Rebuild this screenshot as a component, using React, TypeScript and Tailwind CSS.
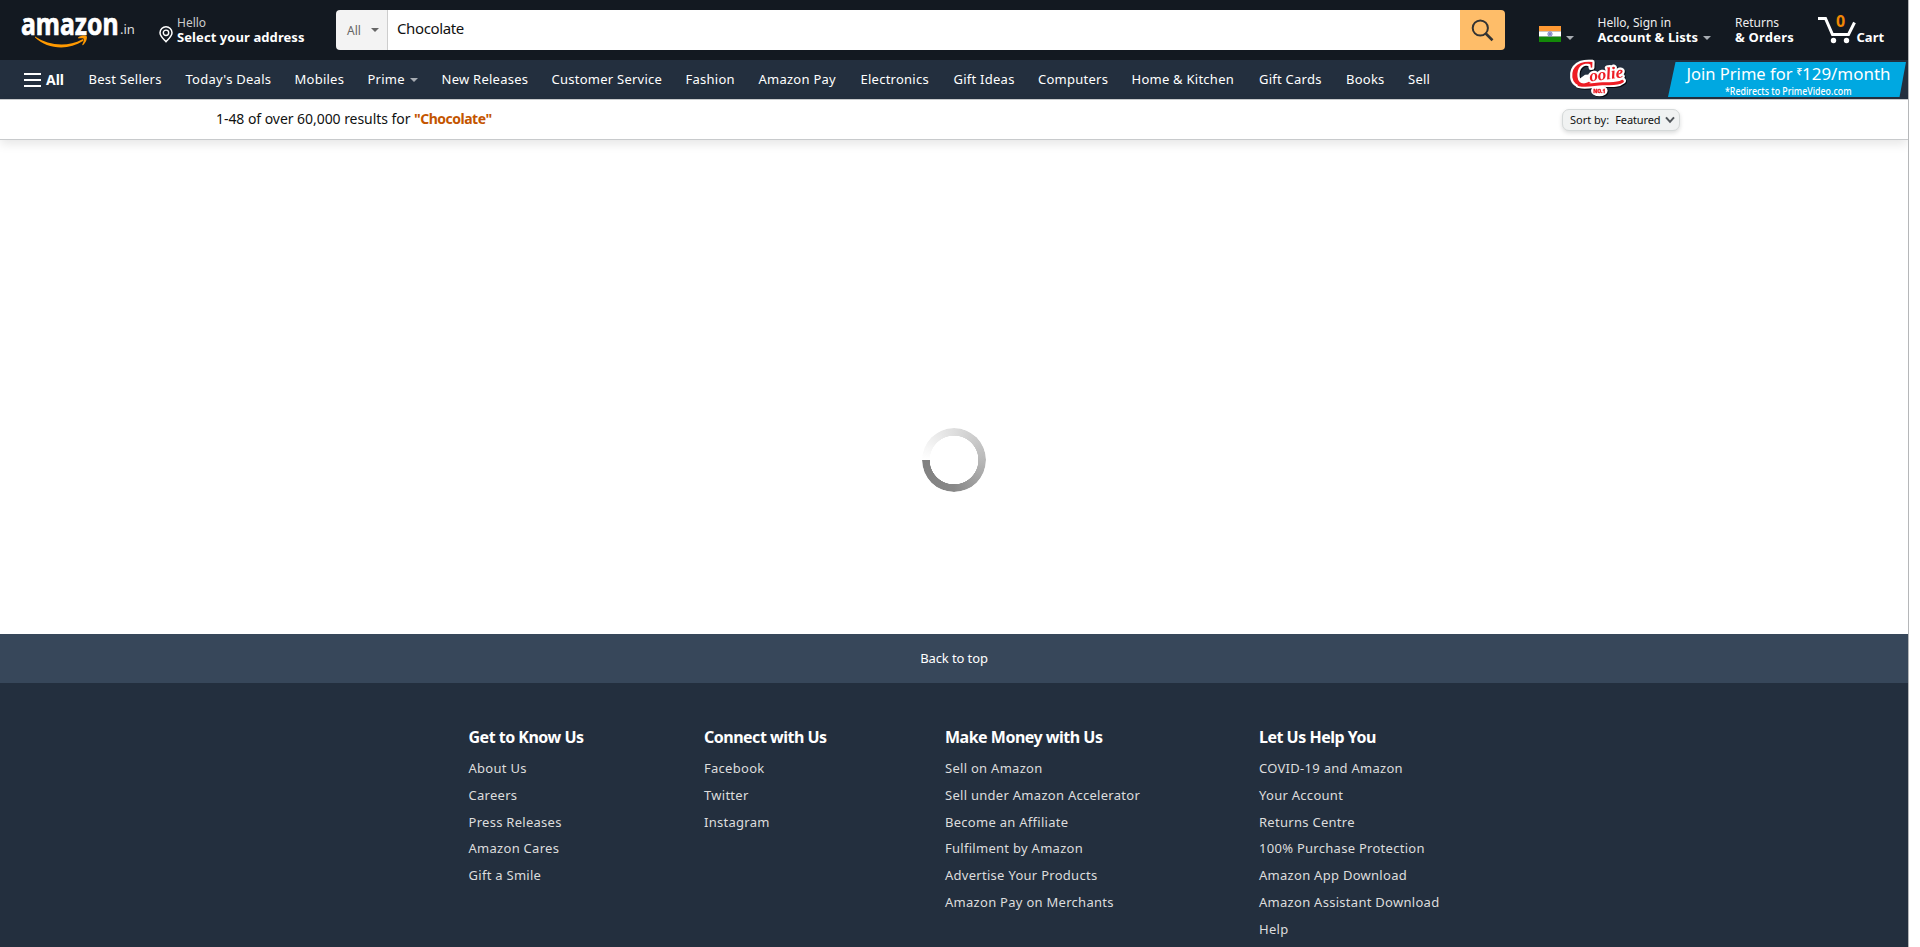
import React from "react";

const nav: { label: string; width: string; arrow?: boolean }[] = [
  { label: "Best Sellers", width: "w-[97px]" },
  { label: "Today's Deals", width: "w-[109px]" },
  { label: "Mobiles", width: "w-[73px]" },
  { label: "Prime", width: "w-[74px]", arrow: true },
  { label: "New Releases", width: "w-[110px]" },
  { label: "Customer Service", width: "w-[134px]" },
  { label: "Fashion", width: "w-[73px]" },
  { label: "Amazon Pay", width: "w-[102px]" },
  { label: "Electronics", width: "w-[93px]" },
  { label: "Gift Ideas", width: "w-[84.500px]" },
  { label: "Computers", width: "w-[93.500px]" },
  { label: "Home & Kitchen", width: "w-[127.500px]" },
  { label: "Gift Cards", width: "w-[87px]" },
  { label: "Books", width: "w-[62px]" },
  { label: "Sell", width: "w-[40px]" },
];

const columns: { title: string; width: string; links: string[] }[] = [
  { title: "Get to Know Us", width: "w-[235.500px]", links: ["About Us", "Careers", "Press Releases", "Amazon Cares", "Gift a Smile"] },
  { title: "Connect with Us", width: "w-[241px]", links: ["Facebook", "Twitter", "Instagram"] },
  {
    title: "Make Money with Us",
    width: "w-[314px]",
    links: ["Sell on Amazon", "Sell under Amazon Accelerator", "Become an Affiliate", "Fulfilment by Amazon", "Advertise Your Products", "Amazon Pay on Merchants"],
  },
  {
    title: "Let Us Help You",
    width: "w-[240px]",
    links: ["COVID-19 and Amazon", "Your Account", "Returns Centre", "100% Purchase Protection", "Amazon App Download", "Amazon Assistant Download", "Help"],
  },
];

function Caret({ className = "" }: { className?: string }) {
  return (
    <svg className={className} width="8" height="4" viewBox="0 0 8 4">
      <path d="M0 0H8L4 4Z" fill="currentColor" />
    </svg>
  );
}

function AmazonLogo() {
  return (
    <svg className="overflow-visible" width="118" height="48" viewBox="0 0 118 48">
      <text transform="translate(-1 32.500) scale(0.825 1)" fontSize="30" fontWeight="700" fill="#fff" stroke="#fff" strokeWidth="0.7">
        amazon
      </text>
      <text x="98" y="32" fontSize="13" fill="#ddd">
        .in
      </text>
      <g transform="translate(0 11)" fill="#ff9900">
        <path d="M13 23.500C27 33 46 34 60 26.500C61.300 25.800 62.300 27 61 28C46 38 25 36 13 24.500Z" />
        <path d="M56 24.500C59 22.200 63.500 22 64.700 23.200C65.500 25 64 29.500 61.200 32C60.600 32.500 60 32 60.400 31.300C61.500 29 62.300 26.500 61.700 25.700C61 25 58.500 25.100 56.500 25.400Z" />
      </g>
    </svg>
  );
}

function CoolieLogo() {
  return (
    <svg className="overflow-visible drop-shadow-[1.5px_1.5px_0_#05080f]" width="60" height="37" viewBox="18 9 180 111">
      <ellipse cx="103" cy="98" rx="25" ry="17" fill="#fff" />
      <path d="M42 80C70 86 90 76 112 76C136 76 158 80 172 68" fill="none" stroke="#fff" strokeWidth="21" strokeLinecap="round" />
      <path d="M34 70C60 90 130 70 172 68L165 45L60 50Z" fill="#fff" />
      <text
        transform="translate(22 85) rotate(-7)"
        className="font-['Liberation_Serif',serif] font-bold italic [paint-order:stroke]"
        fill="#ed1c24"
        stroke="#fff"
        strokeWidth="13"
        strokeLinejoin="round"
      >
        <tspan fontSize="102">C</tspan>
        <tspan fontSize="51" dx="-14" dy="-8">oolie</tspan>
      </text>
      <path d="M42 80C70 86 90 77 112 77C136 77 158 80 172 70" fill="none" stroke="#ed1c24" strokeWidth="9" strokeLinecap="round" />
      <text x="103" y="105" fontSize="15" fontWeight="900" textAnchor="middle" fill="#ed1c24" stroke="#ed1c24" strokeWidth="1">
        NO.1
      </text>
    </svg>
  );
}

export default function App() {
  return (
    <div className="flex h-[947px] w-[1920px] overflow-hidden bg-white font-['Noto_Sans',sans-serif] text-[13px] text-[#0f1111]">
      <div className="flex w-[1908px] shrink-0 flex-col">
        <header className="flex h-[60px] shrink-0 items-start bg-[#131921] text-white">
          <div className="ml-[22px] mt-0.5 w-[118px]">
            <AmazonLogo />
          </div>
          <svg className="ml-[18px] mt-[25px]" width="16" height="19" viewBox="0 0 16 19">
            <path d="M8 1.700A6 6 0 0 0 2 7.700C2 11 5 13.500 8 16.700C11 13.500 14 11 14 7.700A6 6 0 0 0 8 1.700Z" fill="none" stroke="#fff" strokeWidth="1.500" />
            <circle cx="8" cy="7.800" r="2.700" fill="none" stroke="#fff" strokeWidth="1.400" />
          </svg>
          <div className="ml-[3px] mt-4 w-[159px] whitespace-nowrap leading-[14px]">
            <div className="text-xs leading-[14px] text-[#ccc]">Hello</div>
            <div className="text-[13px] font-bold leading-[15px] tracking-[0.08px]">Select your address</div>
          </div>
          <div className="mt-[10px] flex h-10 w-[1169px] overflow-hidden rounded text-[#111]">
            <div className="flex w-[52px] items-center border-r border-[#cdcdcd] bg-[#f3f3f3] pl-[11px] pt-0.5 text-xs text-[#666]">
              All
              <Caret className="mb-0.5 ml-[10px]" />
            </div>
            <div className="flex-1 bg-white pl-[9px] text-[15px] leading-[37px] tracking-[-0.38px]">Chocolate</div>
            <div className="flex w-[45px] items-center justify-center bg-[#febd69]">
              <svg width="23" height="23" viewBox="0 0 23 23" fill="none" stroke="#333" strokeWidth="2">
                <circle cx="9.300" cy="9" r="7.600" />
                <path d="M14.700 14.500L21.500 21.200" strokeWidth="2.600" />
              </svg>
            </div>
          </div>
          <svg className="ml-[34px] mt-[26px]" width="22" height="16" viewBox="0 0 22 16">
            <path d="M0 0H22V5.300H0Z" fill="#ff9933" />
            <path d="M0 5.300H22V10.700H0Z" fill="#fff" />
            <path d="M0 10.700H22V16H0Z" fill="#138808" />
            <circle cx="11" cy="8" r="2.200" fill="#b9b9e0" stroke="#6666b8" strokeWidth=".7" />
            <circle cx="11" cy="8" r=".7" fill="#222288" />
          </svg>
          <Caret className="ml-[5px] mt-9 text-[#a7acb2]" />
          <div className="ml-[23.500px] mt-4 w-[137.500px] whitespace-nowrap">
            <div className="text-xs leading-[14px] text-[#eee]">Hello, Sign in</div>
            <div className="flex items-center text-[13px] font-bold leading-[15px] tracking-[0.08px]">
              Account &amp; Lists
              <Caret className="ml-[5px] text-[#a7acb2]" />
            </div>
          </div>
          <div className="mt-4 w-[83px] whitespace-nowrap">
            <div className="text-xs leading-[14px] text-[#eee]">Returns</div>
            <div className="text-[13px] font-bold leading-[15px] tracking-[0.2px]">&amp; Orders</div>
          </div>
          <svg className="mt-1.5" width="39" height="40" viewBox="0 -6 39 40">
            <path d="M0 6.500H7.500L14.500 22.500H30.500L36.500 10.500" fill="none" stroke="#fff" strokeWidth="3" />
            <circle cx="15.500" cy="28.500" r="2.700" fill="#fff" />
            <circle cx="28.500" cy="28.500" r="2.700" fill="#fff" />
            <text x="22.500" y="15" textAnchor="middle" fontSize="16" fontWeight="700" fill="#f08804">0</text>
          </svg>
          <div className="-ml-[0.500px] mt-[30px] text-[13px] font-bold leading-[15px]">Cart</div>
        </header>

        <nav className="flex h-[39px] shrink-0 items-center bg-[#232f3e] text-white">
          <div className="ml-6 flex w-[64.500px] items-center gap-[5px]">
            <svg width="17" height="14" viewBox="0 0 17 14">
              <path d="M0 1H17M0 7H17M0 13H17" stroke="#fff" strokeWidth="2" />
            </svg>
            <span className="text-sm font-bold">All</span>
          </div>
          {nav.map((n) => (
            <div key={n.label} className={"flex shrink-0 items-center whitespace-nowrap text-[13px] tracking-[0.25px] " + n.width}>
              {n.label}
              {n.arrow && <Caret className="ml-[5px] text-[#a7acb2]" />}
            </div>
          ))}
          <div className="ml-[123px]">
            <CoolieLogo />
          </div>
          <svg className="ml-[37px]" width="238" height="35" viewBox="0 0 238 35">
            <path d="M7.500 0H238L231.500 35H0Z" fill="#00a8e1" />
            <text x="18.500" y="18" textLength="106" lengthAdjust="spacingAndGlyphs" fontSize="16.500" fill="#fff">Join Prime for</text>
            <text x="128.500" y="12.500" fontSize="10" fill="#fff" stroke="#fff" strokeWidth="0.300">₹</text>
            <text x="134" y="18" textLength="88.500" lengthAdjust="spacingAndGlyphs" fontSize="16.500" fill="#fff">129/month</text>
            <text x="57" y="33" textLength="126.500" lengthAdjust="spacingAndGlyphs" fontSize="10" fontWeight="500" fill="#fff">*Redirects to PrimeVideo.com</text>
          </svg>
        </nav>

        <section className="flex h-[41px] shrink-0 items-center border-y border-[#c8cacc] bg-white shadow-[0_4px_10px_rgba(0,0,0,0.1)]">
          <div className="mb-0.5 ml-[216px] w-[1346px] whitespace-nowrap text-[14px] tracking-[-0.050px]">
            1-48 of over 60,000 results for <span className="font-bold tracking-[-0.5px] text-[#c45500]">"Chocolate"</span>
          </div>
          <div className="mt-px flex h-[22px] w-[118px] items-center whitespace-nowrap rounded-[7px] border border-[#d5d9d9] bg-[#f0f2f2] pl-[7px] text-[11px] shadow-[0_2px_4px_rgba(15,17,17,0.15)]">
            Sort by: <span className="ml-1.5 tracking-[-0.1px]">Featured</span>
            <svg className="ml-1" width="10" height="8" viewBox="0 0 10 8">
              <path d="M1 1.300L5 5.800L9 1.300" fill="none" stroke="#50555a" strokeWidth="2" />
            </svg>
          </div>
        </section>

        <main className="flex h-[494px] shrink-0 items-center justify-center pt-[146px]">
          <div className="size-16 rounded-full bg-[conic-gradient(from_270deg,#fff,#f2f2f2_35deg,#dedede_90deg,#b8b8b8_180deg,#888_270deg,#808080)] [mask:radial-gradient(circle,transparent_24px,#000_24.500px)]" />
        </main>

        <footer className="flex grow flex-col bg-[#232f3e] text-white">
          <div className="flex h-[49px] shrink-0 items-center justify-center bg-[#37475a] text-[13px] tracking-[-0.1px]">Back to top</div>
          <div className="flex pl-[468.500px] pt-[43px]">
            {columns.map((c) => (
              <div key={c.title} className={"shrink-0 whitespace-nowrap " + c.width}>
                <h2 className="mb-[7px] text-base font-bold leading-[22px] tracking-[-0.5px]">{c.title}</h2>
                <ul className="text-[13px] leading-[26.800px] tracking-[0.28px] text-[#ddd]">
                  {c.links.map((l) => (
                    <li key={l}>{l}</li>
                  ))}
                </ul>
              </div>
            ))}
          </div>
        </footer>
      </div>
      <div className="w-3 border-l border-[#b5b7b9] bg-white" />
    </div>
  );
}
